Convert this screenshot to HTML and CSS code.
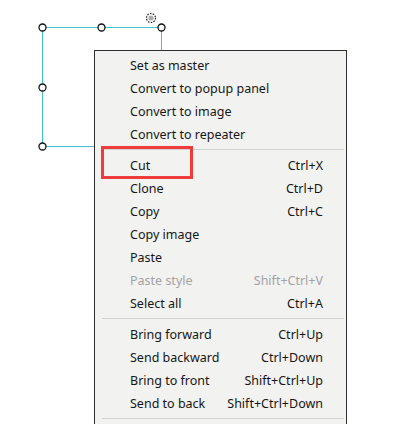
FILE: index.html
```html
<!DOCTYPE html>
<html>
<head>
<meta charset="utf-8">
<link rel="stylesheet" href="styles.css">
</head>
<body>
<div class="canvas">
  <svg class="selection" width="200" height="170" viewBox="0 0 200 170">
    <rect x="42.5" y="27.5" width="119" height="119" fill="none" stroke="#3fc3d3" stroke-width="1"/>
    <circle cx="151" cy="18" r="4.5" fill="#fff" stroke="#222" stroke-width="1.2" stroke-dasharray="1.6 1.2"/>
    <circle cx="151" cy="18" r="2.6" fill="#aaaaaa"/>
    <circle cx="42.5" cy="27.5" r="3.5" fill="#fff" stroke="#111" stroke-width="1.3"/>
    <circle cx="101.5" cy="27.5" r="3.5" fill="#fff" stroke="#111" stroke-width="1.3"/>
    <circle cx="161.5" cy="27.5" r="3.5" fill="#fff" stroke="#111" stroke-width="1.3"/>
    <circle cx="42.5" cy="87.5" r="3.5" fill="#fff" stroke="#111" stroke-width="1.3"/>
    <circle cx="42.5" cy="146.5" r="3.5" fill="#fff" stroke="#111" stroke-width="1.3"/>
  </svg>

  <div class="menu">
    <div class="item"><span class="label">Set as master</span></div>
    <div class="item"><span class="label">Convert to popup panel</span></div>
    <div class="item"><span class="label">Convert to image</span></div>
    <div class="item"><span class="label">Convert to repeater</span></div>
    <div class="sep"></div>
    <div class="item"><span class="label">Cut</span><span class="key">Ctrl+X</span></div>
    <div class="item"><span class="label">Clone</span><span class="key">Ctrl+D</span></div>
    <div class="item"><span class="label">Copy</span><span class="key">Ctrl+C</span></div>
    <div class="item"><span class="label">Copy image</span></div>
    <div class="item"><span class="label">Paste</span></div>
    <div class="item disabled"><span class="label">Paste style</span><span class="key">Shift+Ctrl+V</span></div>
    <div class="item"><span class="label">Select all</span><span class="key">Ctrl+A</span></div>
    <div class="sep"></div>
    <div class="item"><span class="label">Bring forward</span><span class="key">Ctrl+Up</span></div>
    <div class="item"><span class="label">Send backward</span><span class="key">Ctrl+Down</span></div>
    <div class="item"><span class="label">Bring to front</span><span class="key">Shift+Ctrl+Up</span></div>
    <div class="item"><span class="label">Send to back</span><span class="key">Shift+Ctrl+Down</span></div>
    <div class="sep"></div>
  </div>

  <div class="highlight"></div>
</div>
</body>
</html>
```

FILE: styles.css
```css
html, body {
  margin: 0;
  padding: 0;
  background: #ffffff;
  overflow: hidden;
}

.canvas {
  position: relative;
  width: 409px;
  height: 424px;
  overflow: hidden;
  font-family: "Noto Sans", "Open Sans", sans-serif;
  font-size: 12.5px;
  color: #161616;
}

.selection {
  position: absolute;
  left: 0;
  top: 0;
}

.menu {
  position: absolute;
  left: 94px;
  top: 50px;
  width: 251px;
  background: #f2f2f1;
  border: 1px solid #2e2e2e;
  padding-top: 3px;
  padding-bottom: 40px;
  display: flex;
  flex-direction: column;
}

.item {
  height: 23px;
  display: flex;
  align-items: center;
  justify-content: space-between;
  padding-left: 35px;
  padding-right: 23px;
  white-space: nowrap;
}

.item.disabled {
  color: #a3a3a3;
}

.sep {
  height: 1px;
  background: #d3d3d3;
  margin: 3px 2px 4px 7px;
}

.highlight {
  position: absolute;
  left: 101px;
  top: 146px;
  width: 86px;
  height: 27px;
  border: 3px solid #ef3b3b;
}
```
